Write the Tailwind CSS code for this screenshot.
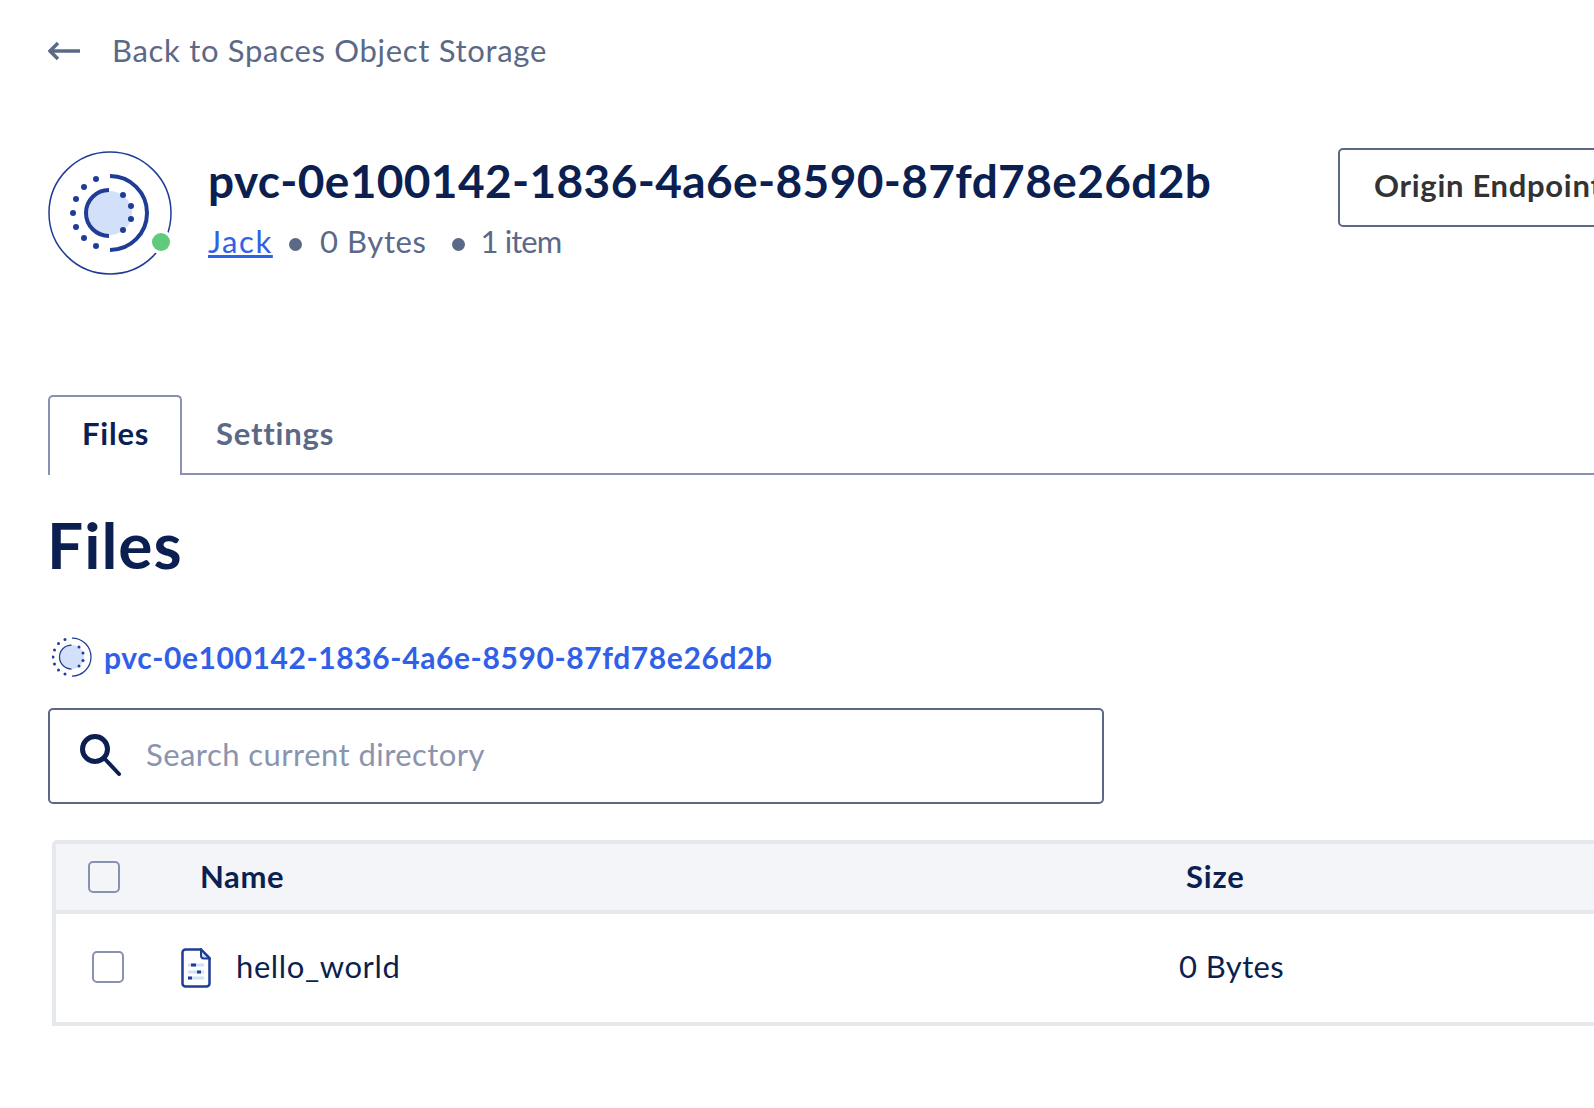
<!DOCTYPE html>
<html><head><script src="https://cdn.jsdelivr.net/npm/@tailwindcss/browser@4"></script></head>
<body class="bg-white overflow-hidden font-['Lato',sans-serif]">
<div class="w-[1594px] h-[1108px] overflow-hidden pl-[48px] text-[#5b6987]">
  <div class="flex items-center h-[30px] mt-[36px] gap-[31px]">
    <svg width="34" height="22" viewBox="0 0 34 22" fill="none" stroke="#5b6987" stroke-width="3.5" class="-mt-[1px]"><path d="M32 11H2"/><path d="M10 3l-8 8 8 8" stroke-width="3.5"/></svg>
    <span class="text-[31px] tracking-[0.7px] -mt-[2px] -ml-[1px]">Back to Spaces Object Storage</span>
  </div>
  <div class="flex mt-[85px] h-[124px] w-[1700px]">
    <svg width="124" height="124" viewBox="-62 -62 124 124" fill="none" class="shrink-0">
      <circle r="61" stroke="#1f3d96" stroke-width="1.5"/>
      <circle r="22" fill="#d2e0fa"/>
      <path d="M-1-23A23 23 0 0 0-1 23" stroke="#1f3d96" stroke-width="4"/>
      <path d="M0-37A37 37 0 0 1 0 37" stroke="#1f3d96" stroke-width="4"/>
      <g fill="#1f3d96"><circle cx="-14" cy="-34" r="3"/><circle cx="-26" cy="-26" r="3"/><circle cx="-34" cy="-14" r="3"/><circle cx="-37" cy="0" r="3"/><circle cx="-34" cy="14" r="3"/><circle cx="-26" cy="25" r="3"/><circle cx="-14" cy="33" r="3"/><circle cx="13" cy="-18" r="3"/><circle cx="21" cy="-7" r="3"/><circle cx="21" cy="6" r="3"/><circle cx="13" cy="17" r="3"/></g>
      <circle cx="51" cy="29" r="12" fill="#fff"/><circle cx="51" cy="29" r="9" fill="#5fcb7b"/>
    </svg>
    <div class="ml-[36px] w-[1130px] shrink-0">
      <div class="text-[46px] leading-[56px] font-bold text-[#0b1f51] mt-[2px] tracking-[0.37px]">pvc-0e100142-1836-4a6e-8590-87fd78e26d2b</div>
      <div class="flex items-center text-[31px] tracking-[0.6px] leading-[40px] mt-[12px]">
        <span class="text-[#3160e8] underline w-[64px] tracking-[1.6px]">Jack</span>
        <span class="w-[13px] h-[13px] rounded-full bg-[#5b6987] ml-[17px] mt-[6px]"></span>
        <span class="ml-[18px]">0 Bytes</span>
        <span class="w-[13px] h-[13px] rounded-full bg-[#5b6987] ml-[25px] mt-[6px]"></span>
        <span class="ml-[16px] tracking-[-0.9px]">1 item</span>
      </div>
    </div>
    <div class="w-[300px] h-[79px] -mt-[3px] shrink-0 border-2 border-[#5b6987] rounded-[5px] flex items-center pl-[34px] pb-[5px] text-[31px] tracking-[0.7px] font-bold text-[#333]">Origin Endpoint</div>
  </div>
  <div class="flex mt-[120px] h-[80px] w-[1600px] border-b-2 border-[#8892b0]">
    <div class="w-[134px] h-[80px] border-2 border-b-0 border-[#8892b0] rounded-t-[5px] bg-white pl-[32px] pb-[5px] flex items-center text-[31px] tracking-[0.8px] font-bold text-[#0b1f51]">Files</div>
    <div class="pl-[34px] pb-[2px] flex items-center text-[31px] tracking-[0.8px] font-bold">Settings</div>
  </div>
  <h1 class="text-[64px] tracking-[1px] leading-[70px] font-bold text-[#0b1f51] mt-[35px] -ml-[1px]">Files</h1>
  <div class="flex items-center mt-[57px] h-[40px] ml-[4px]">
    <svg width="40" height="40" viewBox="-40 -40 80 80" fill="none" class="shrink-0">
      <circle r="24" fill="#d2e0fa"/>
      <path d="M-1-24A24 24 0 0 0-1 24" stroke="#1f3d96" stroke-width="2.5"/>
      <path d="M0-38A38 38 0 0 1 0 38" stroke="#1f3d96" stroke-width="2.5"/>
      <g fill="#1f3d96"><circle cx="-14" cy="-35" r="3"/><circle cx="-27" cy="-27" r="3"/><circle cx="-35" cy="-14" r="3"/><circle cx="-38" cy="0" r="3"/><circle cx="-35" cy="14" r="3"/><circle cx="-27" cy="26" r="3"/><circle cx="-14" cy="34" r="3"/><circle cx="14" cy="-20" r="3"/><circle cx="22" cy="-8" r="3"/><circle cx="22" cy="7" r="3"/><circle cx="14" cy="18" r="3"/></g>
    </svg>
    <span class="ml-[12px] text-[30px] tracking-[0.6px] font-bold text-[#3160e8]">pvc-0e100142-1836-4a6e-8590-87fd78e26d2b</span>
  </div>
  <div class="w-[1056px] h-[96px] mt-[31px] border-2 border-[#5b6987] rounded-[5px] flex items-center pl-[30px] pb-[1px]">
    <svg width="42" height="44" viewBox="0 0 42 44" fill="none" stroke="#0b1f51" stroke-linecap="round" class="shrink-0"><circle cx="15" cy="15" r="12.5" stroke-width="5"/><path d="M24 24l15 16" stroke-width="4"/></svg>
    <span class="ml-[24px] -mt-[2px] text-[31px] tracking-[0.45px] text-[#8a94ad]">Search current directory</span>
  </div>
  <div class="w-[1600px] ml-[4px] mt-[36px] border-4 border-[#e5e8ed] rounded-tl-[5px]">
    <div class="flex items-center h-[66px] bg-[#f3f5f9]">
      <span class="w-[32px] h-[32px] border-2 border-[#8892b0] rounded-[5px] ml-[32px] shrink-0"></span>
      <span class="ml-[80px] w-[986px] text-[31px] tracking-[0.6px] font-bold text-[#0b1f51] pb-[2px]">Name</span>
      <span class="text-[31px] tracking-[0.8px] font-bold text-[#0b1f51] pb-[2px]">Size</span>
    </div>
    <div class="h-[4px] bg-[#e5e8ed]"></div>
    <div class="flex items-center h-[108px]">
      <span class="w-[32px] h-[32px] border-2 border-[#8892b0] rounded-[5px] ml-[36px] mb-[2px] shrink-0"></span>
      <svg width="30" height="40" viewBox="0 0 30 40" fill="none" class="ml-[57px] shrink-0">
        <path d="M20 1.5H4.5a3 3 0 0 0-3 3v31a3 3 0 0 0 3 3h21a3 3 0 0 0 3-3V10z" stroke="#1f3d96" stroke-width="2.5"/>
        <path d="M20 1.5v6a3 3 0 0 0 3 3h5.5z" stroke="#1f3d96" stroke-width="2" fill="#d2e0fa"/>
        <path d="M7 17h16M7 24h16M7 30h16" stroke="#d2e0fa" stroke-width="3"/>
        <path d="M10 17h5M16 24h4M7 30h4" stroke="#1f3d96" stroke-width="3"/>
      </svg>
      <span class="ml-[25px] w-[943px] text-[31px] tracking-[0.6px] text-[#0b1f51] pb-[3px]">hello_world</span>
      <span class="text-[31px] tracking-[0.4px] text-[#0b1f51] pb-[3px]">0 Bytes</span>
    </div>
  </div>
</div>
</body></html>
